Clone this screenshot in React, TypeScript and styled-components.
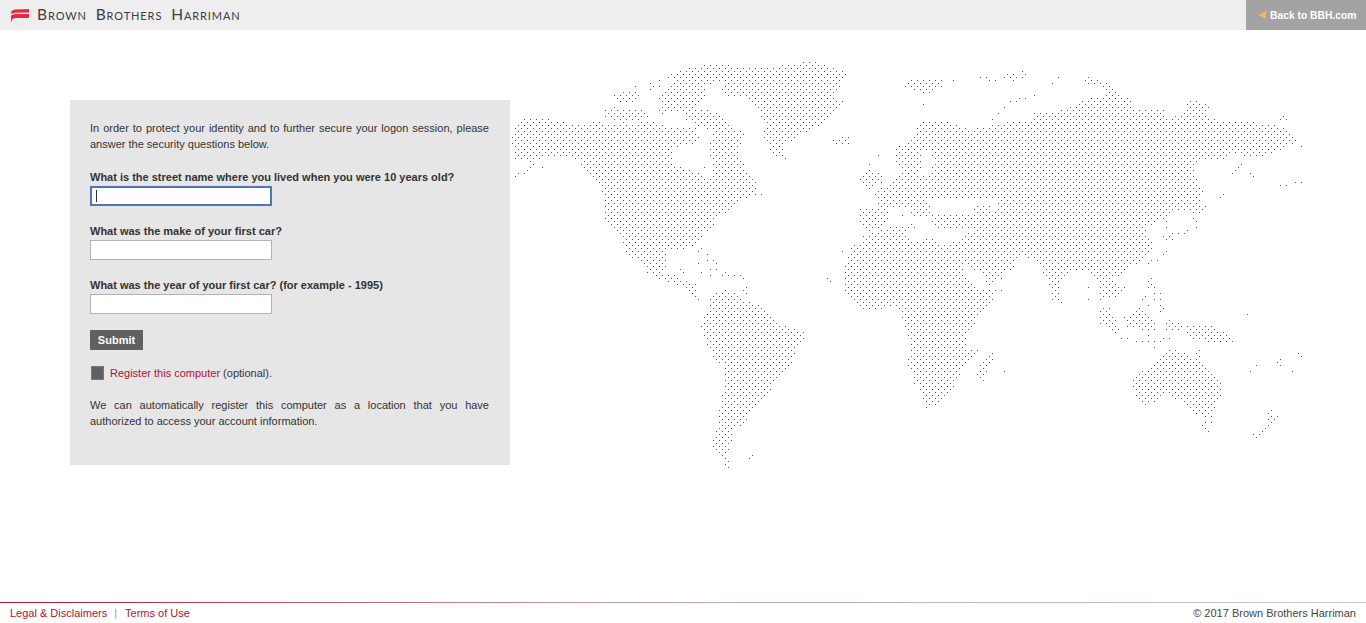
import React from "react";
import styled, { createGlobalStyle } from "styled-components";

type Point = [number, number];

// outlines were traced over 3x crops of the map, so each one keeps its crop origin
const trace = (ox: number, oy: number, pts: string): Point[] =>
  pts
    .trim()
    .split(/\s+/)
    .map((p) => {
      const [x, y] = p.split(",").map(Number);
      return [ox + x / 3, oy + y / 3] as Point;
    });

const LAND: Point[][] = [
  // north america
  trace(510, 55, "3,240 30,198 60,188 100,188 165,203 215,208 270,197 300,207 345,205 430,200 470,215 560,215 565,245 572,262 540,272 500,275 490,285 492,330 520,335 560,350 585,372 610,372 605,320 600,300 590,280 600,262 610,240 612,225 690,225 702,240 690,270 682,295 700,325 720,365 745,390 745,410 768,428 720,420 700,435 655,470 625,480 612,500 610,535 320,535 300,520 285,490 285,420 270,400 250,365 213,345 213,318 160,305 100,310 70,322 15,315 12,280 3,262"),
  trace(620, 230, "-8,-6 285,-6 250,12 225,48 195,50 195,58 140,58 140,100 135,130 175,130 197,130 197,118 178,118 178,138 198,150 228,160 230,190 245,220 235,220 215,190 190,170 140,158 105,138 75,128 80,105 55,92 30,85 15,60 5,25"),
  // arctic islands and greenland
  trace(510, 55, "475,62 510,46 580,28 660,28 700,40 770,40 880,20 915,18 960,38 1025,52 990,72 990,100 970,122 998,135 998,145 960,180 950,205 900,225 860,250 825,272 827,312 790,298 770,265 755,237 768,205 745,172 738,150 700,125 636,120 636,95 662,92 640,70 630,78 590,90 475,75"),
  trace(510, 55, "440,120 490,85 590,80 590,135 545,155 600,165 640,185 665,205 695,238 612,225 560,215 530,195 510,170 490,165 460,180 440,170 455,150"),
  trace(510, 55, "275,170 310,152 345,165 410,165 415,185 385,195 345,205 290,190"),
  trace(510, 55, "305,125 340,110 375,110 395,130 370,150 335,145"),
  trace(510, 55, "950,250 1025,245 1020,265 985,275"),
  // south america
  trace(690, 260, "60,115 75,100 105,90 150,105 170,120 205,135 232,160 260,185 295,200 345,215 340,240 320,275 305,320 270,350 250,380 240,405 205,440 185,462 155,495 130,510 125,545 115,575 115,600 125,612 115,625 100,605 85,585 68,575 68,540 80,510 85,450 95,410 105,360 105,320 70,295 50,250 35,215 32,198 45,165 60,140"),
  // eurasia, north part
  trace(900, 55, "5,285 35,240 70,200 115,195 140,195 170,210 210,225 230,220 270,210 340,200 395,200 405,170 440,170 480,165 520,150 575,125 700,125 695,160 790,165 800,185 825,185 860,170 860,130 930,145 920,185 950,195 1015,195 1080,205 1150,215 1195,245 1190,260 1140,285 1080,305 1000,300 960,320 900,310 880,330 895,380 910,410 890,430 915,455 880,468 800,470 790,435 5,435"),
  trace(820, 140, "222,15 320,15 320,195 175,195 165,170 165,150 195,140 225,118 240,105 238,82 222,60"),
  trace(820, 140, "270,195 740,195 740,300 460,300 460,268 345,268 330,240 330,222 320,230 300,232 285,238 270,225"),
  trace(820, 140, "175,190 260,190 260,200 180,200"),
  trace(820, 140, "118,205 205,205 205,235 190,260 145,275 120,245"),
  trace(820, 140, "120,135 120,115 140,85 150,70 160,78 150,95 175,98 190,110 190,130 160,140"),
  // africa and arabia
  trace(820, 140, "125,290 150,278 200,262 282,262 262,282 262,295 300,308 320,296 345,296 350,310 420,305 420,290 460,270 735,265 735,340 610,340 585,370 555,405 520,425 500,445 520,458 518,490 490,498 125,498 100,478 72,450 72,375 85,345 95,322 125,298"),
  trace(690, 260, "505,128 895,128 885,155 870,170 855,190 845,205 835,225 835,265 845,270 865,270 845,292 820,315 810,340 808,362 785,385 770,410 760,432 710,445 698,430 690,385 672,370 672,345 655,320 655,295 665,260 655,225 645,200 635,165 608,142 560,150 520,148"),
  trace(690, 260, "870,310 890,298 910,270 910,298 895,325 885,360 870,370 862,342"),
  // south and east asia
  trace(1000, 200, "-5,-5 565,-5 540,20 510,40 490,60 445,80 445,115 458,125 455,150 412,190 380,205 360,225 338,240 300,245 285,235 270,235 272,215 212,215 190,235 178,270 185,308 155,300 150,270 140,240 125,205 95,178 70,170 -5,170"),
  trace(1000, 200, "-5,165 40,180 42,200 20,218 3,238 -5,240"),
  trace(1000, 200, "270,215 360,215 338,245 375,262 378,272 350,292 310,300 300,300 298,250 280,235"),
  trace(1000, 200, "292,322 330,322 345,352 365,395 355,405 328,395 300,370"),
  trace(1000, 200, "372,350 415,325 440,340 465,365 465,395 440,395 380,380"),
  trace(1000, 200, "555,380 640,370 660,390 690,410 715,425 660,435 570,415"),
  trace(1000, 200, "498,360 530,362 560,385 520,392 498,390"),
  // australia
  trace(1010, 260, "368,345 395,330 430,320 460,290 485,265 520,275 555,310 560,270 572,270 575,300 590,330 610,345 635,370 635,420 615,440 610,470 580,470 545,465 530,440 505,420 470,405 440,425 395,440 385,420 368,380"),
  // small arctic groups
  trace(900, 55, "15,95 35,72 125,75 125,95 95,115 50,112"),
  trace(900, 55, "305,65 330,50 352,65 340,78 310,70"),
  trace(900, 55, "555,85 555,60 590,75 620,85 655,105 660,125 620,125 610,95"),
  trace(900, 55, "990,345 1025,320 1025,345 990,380"),
];

const SEAS: Point[][] = [
  trace(820, 140, "303,30 328,30 340,65 332,105 300,105 305,72"),
  trace(820, 140, "345,190 455,190 458,222 330,222 330,205"),
  trace(820, 140, "510,195 532,195 532,215 515,220"),
  trace(820, 140, "430,372 445,372 470,395 492,415 503,445 482,445 452,425 430,405"),
];

// single dots: small islands and thin coasts
const strays: [number, number, string][] = [
  [510, 55, "15,365 25,355 42,355 50,345 60,337 70,328 98,337 378,95 420,87 448,75 420,102 438,95 448,93 585,337 700,238 998,590 1105,300 1188,92 1197,85"],
  [620, 230, "243,55 243,65 260,72 235,100 260,92 278,90 290,100 243,127 270,118 290,118 270,135 300,135 315,127 325,135 345,135 362,135 370,145 380,172 370,183 378,190"],
  [690, 260, "411,55 420,64 178,595 187,586 915,90 935,90 943,334"],
  [820, 140, "175,45 148,145 247,225 280,252 270,255 280,262 22,415 31,424 68,334"],
  [900, 55, "160,75 240,67 260,67 275,75 285,75 367,48 378,58 367,65 475,67 457,85 285,190 300,172 310,160 330,140 345,135 355,130 378,125 400,120 70,147 1140,190 1150,185 1160,190 1204,273 1050,355 1060,365 960,425 970,418 1140,390 1160,390 1190,381 1204,381 885,490 880,500 880,520 865,525 850,530 840,535 820,550 805,540 790,545 795,520 790,500"],
  [1000, 200, "265,262 265,297 3,270 600,0 610,18 590,10 600,20 605,28 590,37 580,40 590,65 580,85 570,90 553,90 545,100 516,100 508,108 500,115 517,115 490,108 490,162 500,153 445,190 455,180 473,180 447,245 455,235 447,262 455,252 465,262 480,280 465,280 480,295 465,295 480,315 490,325 480,333 436,288 428,298 436,315 425,325 742,342 365,415 380,415 408,423 430,423 445,423 463,423 480,423 465,440 445,405 490,415 507,415"],
  [1010, 260, "575,495 590,490 585,505 595,513 605,487 785,450 775,460 785,468 800,468 775,478 792,478 785,487 775,496 767,505 757,514 748,523 730,523 739,532 712,162 740,316 720,334 810,298 802,307 810,316 847,334 865,280 875,289"],
];

const inside = (x: number, y: number, poly: Point[]) => {
  let hit = false;
  for (let i = 0, j = poly.length - 1; i < poly.length; j = i++) {
    const [xi, yi] = poly[i];
    const [xj, yj] = poly[j];
    if (yi > y !== yj > y && x < ((xj - xi) * (y - yi)) / (yj - yi) + xi) hit = !hit;
  }
  return hit;
};

// the map is a checker lattice on a 3px grid
const ORIGIN_X = 512;
const ORIGIN_Y = 137;

const buildDots = () => {
  const seen = new Set<string>();
  for (let j = -27; j <= 112; j++) {
    for (let i = 0; i <= 266; i++) {
      if ((i + j) % 2 !== 0) continue;
      const x = ORIGIN_X + i * 3;
      const y = ORIGIN_Y + j * 3;
      const px = x + 0.5;
      const py = y + 0.5;
      if (LAND.some((p) => inside(px, py, p)) && !SEAS.some((p) => inside(px, py, p))) {
        seen.add(`${x},${y}`);
      }
    }
  }
  strays.forEach(([ox, oy, list]) => {
    trace(ox, oy, list).forEach(([sx, sy]) => {
      const j = Math.round((sy - ORIGIN_Y) / 3);
      let i = Math.round((sx - ORIGIN_X) / 3);
      if ((i + j) % 2 !== 0) i += sx - ORIGIN_X > i * 3 ? 1 : -1;
      seen.add(`${ORIGIN_X + i * 3},${ORIGIN_Y + j * 3}`);
    });
  });
  return Array.from(seen)
    .map((d) => {
      const [x, y] = d.split(",");
      return `M${x} ${y}h1v1h-1z`;
    })
    .join("");
};

const MAP_PATH = buildDots();

const questions = [
  { id: "q1", text: "What is the street name where you lived when you were 10 years old?", focused: true },
  { id: "q2", text: "What was the make of your first car?", focused: false },
  { id: "q3", text: "What was the year of your first car? (for example - 1995)", focused: false },
];

export default function App() {
  return (
    <Page>
      <GlobalStyle />
      <Header>
        <Brand>
          <LogoMark width="18" height="13" viewBox="0 0 18 13">
            <path d="M0 3.4C.6 1.3 2.2.5 4.5.4L18 0v3.6L4.5 3.7C2.4 3.8.8 4.2 0 5.2z" fill="#e8293f" />
            <path d="M0 7C.8 5.6 2.4 5.1 4.5 5L18 4.9v4L4.5 9C2.4 9.1.7 10 .4 12.8L0 13z" fill="#e8293f" />
          </LogoMark>
          <BrandName>Brown Brothers Harriman</BrandName>
        </Brand>
        <BackLink href="#">
          <BackArrow />
          Back to BBH.com
        </BackLink>
      </Header>

      <Main>
        <Panel>
          <Intro>
            In order to protect your identity and to further secure your logon session, please answer the
            security questions below.
          </Intro>
          {questions.map((q) => (
            <Question key={q.id}>
              <Label htmlFor={q.id}>{q.text}</Label>
              <InputWrap>
                <Input id={q.id} type="text" readOnly $focused={q.focused} />
                {q.focused && <Caret />}
              </InputWrap>
            </Question>
          ))}
          <Submit type="button">Submit</Submit>
          <RegisterRow>
            <Checkbox />
            <span>
              <RedLink href="#">Register this computer</RedLink> (optional).
            </span>
          </RegisterRow>
          <Note>
            We can automatically register this computer as a location that you have authorized to access your
            account information.
          </Note>
        </Panel>
        <MapBox>
          <svg width="800" height="420" viewBox="510 60 800 420" shapeRendering="crispEdges">
            <path d={MAP_PATH} fill="#555" />
          </svg>
        </MapBox>
      </Main>

      <Footer>
        <FooterLinks>
          <RedLink href="#">Legal &amp; Disclaimers</RedLink>
          <Sep>|</Sep>
          <RedLink href="#">Terms of Use</RedLink>
        </FooterLinks>
        <span>© 2017 Brown Brothers Harriman</span>
      </Footer>
    </Page>
  );
}

const GlobalStyle = createGlobalStyle`
  html, body {
    margin: 0;
    background: #fff;
    font-family: "Liberation Sans", Arial, sans-serif;
  }
  * {
    box-sizing: border-box;
  }
`;

const Page = styled.div`
  display: flex;
  flex-direction: column;
  height: 100vh;
  overflow: hidden;
`;

const Header = styled.header`
  display: flex;
  justify-content: space-between;
  align-items: stretch;
  height: 30px;
  background: #eeeeee;
  flex-shrink: 0;
`;

const Brand = styled.div`
  display: flex;
  align-items: center;
  gap: 8px;
  padding-left: 11px;
  padding-bottom: 2px;
`;

const LogoMark = styled.svg`
  margin-top: 3px;
`;

const BrandName = styled.span`
  font-family: "Lato", sans-serif;
  font-variant: small-caps;
  font-size: 15.5px;
  letter-spacing: 0.9px;
  word-spacing: 4px;
  color: #3d3d3d;
`;

const BackLink = styled.a`
  display: flex;
  align-items: center;
  gap: 4px;
  width: 120px;
  padding-left: 12px;
  background: #a3a3a3;
  color: #fff;
  font-size: 10.3px;
  font-weight: bold;
  text-decoration: none;
`;

const BackArrow = styled.i`
  width: 0;
  height: 0;
  border-style: solid;
  border-width: 4px 8px 4px 0;
  border-color: transparent #f4b25a transparent transparent;
`;

const Main = styled.main`
  flex: 1;
  display: flex;
  align-items: flex-start;
  padding-left: 70px;
`;

const Panel = styled.section`
  width: 440px;
  height: 365px;
  margin-top: 70px;
  padding: 20px 21px 0 20px;
  background: #e6e6e6;
  color: #333;
  font-size: 11px;
  line-height: 16px;
`;

const Intro = styled.p`
  margin: 0 0 17px;
  text-align: justify;
`;

const Question = styled.div`
  & + & {
    margin-top: 17px;
  }
`;

const Label = styled.label`
  display: block;
  font-weight: bold;
  height: 16px;
  margin-bottom: 1px;
`;

const InputWrap = styled.div`
  position: relative;
  width: 182px;
  height: 20px;
`;

const Input = styled.input<{ $focused: boolean }>`
  display: block;
  width: 100%;
  height: 100%;
  padding: 0 5px;
  background: #fff;
  outline: none;
  border: ${(p) => (p.$focused ? "2px solid #4f74ba" : "1px solid #b3b3b3")};
`;

const Caret = styled.span`
  position: absolute;
  left: 6px;
  top: 4px;
  width: 1px;
  height: 12px;
  background: #333;
`;

const Submit = styled.button`
  display: block;
  width: 53px;
  height: 20px;
  margin-top: 16px;
  padding: 0;
  border: 0;
  background: #606060;
  color: #fff;
  font-family: inherit;
  font-size: 11px;
  font-weight: bold;
`;

const RegisterRow = styled.div`
  display: flex;
  align-items: center;
  gap: 6px;
  margin-top: 15px;
  padding-left: 1px;
`;

const Checkbox = styled.span`
  width: 13px;
  height: 14px;
  background: #606060;
  border: 1px solid #777;
`;

const RedLink = styled.a`
  color: #b5102f;
  text-decoration: none;
`;

const Note = styled.p`
  margin: 16px 0 0;
  text-align: justify;
`;

const MapBox = styled.div`
  margin-top: 30px;
  line-height: 0;
`;

const Footer = styled.footer`
  display: flex;
  justify-content: space-between;
  align-items: center;
  height: 21px;
  flex-shrink: 0;
  padding: 0 10px;
  border-top: 1px solid transparent;
  border-image: linear-gradient(to right, #b5102f, #c9a0a8 45%, #c8c8c8) 1;
  color: #444;
  font-size: 11px;
`;

const FooterLinks = styled.div`
  display: flex;
  gap: 7px;
`;

const Sep = styled.span`
  color: #999;
  margin-right: 1px;
`;
